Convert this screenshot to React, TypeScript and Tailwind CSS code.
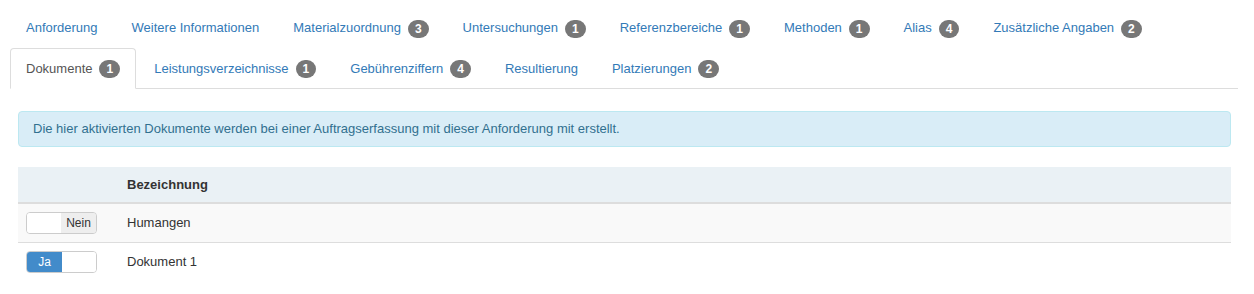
const rowOne = [
  { label: "Anforderung" },
  { label: "Weitere Informationen" },
  { label: "Materialzuordnung", count: 3 },
  { label: "Untersuchungen", count: 1 },
  { label: "Referenzbereiche", count: 1 },
  { label: "Methoden", count: 1 },
  { label: "Alias", count: 4 },
  { label: "Zusätzliche Angaben", count: 2 },
]

const rowTwo = [
  { label: "Dokumente", count: 1, active: true },
  { label: "Leistungsverzeichnisse", count: 1 },
  { label: "Gebührenziffern", count: 4 },
  { label: "Resultierung" },
  { label: "Platzierungen", count: 2 },
]

type TabProps = {
  label: string,
  count?: number,
  active?: boolean,
}

function Badge({ count }: { count: number }) {
  return (
    <span className="inline-block align-middle ml-[7px] min-w-[10px] px-[7px] py-[3px] rounded-[10px] bg-[#777] text-white text-[12px] font-bold leading-none text-center">
      {count}
    </span>
  )
}

function Tab({ label, count, active }: TabProps) {
  return (
    <li className="mr-[2px] -mb-px">
      <a
        href="#"
        className={
          active
            ? "block px-[15px] py-[10px] leading-[19px] border border-[#ddd] border-b-white bg-white rounded-t-[4px] text-[#555]"
            : "block px-[15px] py-[10px] leading-[19px] border border-transparent rounded-t-[4px] text-[#337ab7]"
        }
      >
        {label}
        {count !== undefined && <Badge count={count} />}
      </a>
    </li>
  )
}

function Switch({ on }: { on: boolean }) {
  return (
    <div className="flex w-[71px] h-[22px] border border-[#ccc] rounded-[4px] overflow-hidden text-[12px] leading-[20px]">
      {on ? (
        <>
          <span className="w-[35px] bg-[#428bca] text-white text-center">Ja</span>
          <span className="flex-1 bg-white" />
        </>
      ) : (
        <>
          <span className="w-[34px] bg-white" />
          <span className="flex-1 bg-[#eee] text-[#333] text-center">Nein</span>
        </>
      )}
    </div>
  )
}

export default function App() {
  return (
    <div className="bg-white text-[#333] text-[13px] pt-[7px] pl-[10px] pr-[16px] min-h-[294px]" style={{ fontFamily: '"Liberation Sans", Arial, sans-serif' }}>
      <ul className="flex flex-wrap border-b border-[#ddd]">
        {rowOne.map((t) => (
          <Tab key={t.label} {...t} />
        ))}
        <li className="basis-full h-0" />
        {rowTwo.map((t) => (
          <Tab key={t.label} {...t} />
        ))}
      </ul>
      <div className="pl-[8px] pr-[7px] pt-[22px]">
        <div className="border border-[#bce8f1] bg-[#d9edf7] text-[#31708f] rounded-[4px] px-[14px] py-[8px] leading-[18px]">
          Die hier aktivierten Dokumente werden bei einer Auftragserfassung mit dieser Anforderung mit erstellt.
        </div>
        <table className="w-full mt-[20px] border-collapse">
          <thead>
            <tr className="bg-[#eaf1f5]">
              <th className="w-[101px] p-[8px] border-b-2 border-[#ddd]" />
              <th className="p-[8px] text-left font-bold leading-[19px] border-b-2 border-[#ddd]">Bezeichnung</th>
            </tr>
          </thead>
          <tbody>
            <tr className="bg-[#f9f9f9]">
              <td className="p-[8px] border-b border-[#ddd]">
                <Switch on={false} />
              </td>
              <td className="p-[8px] border-b border-[#ddd] align-middle">Humangen</td>
            </tr>
            <tr>
              <td className="p-[8px]">
                <Switch on />
              </td>
              <td className="p-[8px] align-middle">Dokument 1</td>
            </tr>
          </tbody>
        </table>
      </div>
    </div>
  )
}
